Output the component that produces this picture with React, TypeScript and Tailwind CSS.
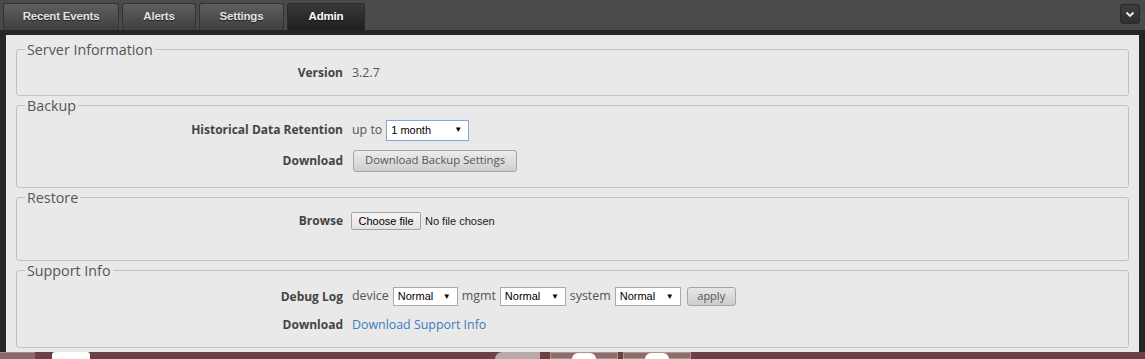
import React from "react";

const sans = { fontFamily: '"Open Sans", "Liberation Sans", sans-serif' };
const arial = { fontFamily: '"Liberation Sans", Arial, sans-serif' };

function Tab({ label, w, active }: { label: string; w: string; active?: boolean }) {
  return (
    <div
      className={`${w} h-[27px] flex items-center justify-center rounded-t-[3px] border border-b-0 text-[11.5px] font-bold tracking-[-0.2px] ${
        active
          ? "bg-gradient-to-b from-[#3a3a3a] to-[#1f1f1f] border-[#2a2a2a] text-white"
          : "bg-gradient-to-b from-[#5f5f5f] to-[#3f3f3f] border-[#333] text-[#e2e2e2]"
      }`}
      style={{ ...arial, textShadow: "0 1px 1px rgba(0,0,0,0.6)" }}
    >
      {label}
    </div>
  );
}

function FakeSelect({ value, w, focus }: { value: string; w: string; focus?: boolean }) {
  return (
    <div
      className={`${w} flex items-center justify-between bg-white border pl-[4px] pr-[6px] text-[11px] text-black ${
        focus ? "border-[#86a6d8] h-[21px]" : "border-[#a9a9a9] h-[19px]"
      }`}
      style={arial}
    >
      <span>{value}</span>
      <span className="text-[8px] leading-none">▼</span>
    </div>
  );
}

function Row({ label, children, className = "" }: { label: string; children?: React.ReactNode; className?: string }) {
  return (
    <div className={`flex items-center ${className}`}>
      <div className="w-[326px] text-right text-[12px] font-bold text-[#444]" style={sans}>
        {label}
      </div>
      <div className="ml-[9px] flex items-center text-[12.4px] text-[#555]" style={sans}>
        {children}
      </div>
    </div>
  );
}

function Box({ title, children, className = "" }: { title: string; children: React.ReactNode; className?: string }) {
  return (
    <fieldset className={`mx-[10px] border border-[#c2c2c2] rounded-[3px] ${className}`}>
      <legend
        className="ml-[8px] px-[2px] h-[19px] leading-[19px] text-[14.3px] text-[#555]"
        style={sans}
      >
        {title}
      </legend>
      {children}
    </fieldset>
  );
}

export default function App() {
  return (
    <div className="w-[1145px] h-[359px] bg-[#262626] overflow-hidden flex flex-col">
      {/* top tab bar */}
      <div className="h-[31px] bg-[#4a4a4a] flex items-end pl-[3px] pr-[5px] relative">
        <div className="flex items-end gap-[3px]">
          <Tab label="Recent Events" w="w-[116px]" />
          <Tab label="Alerts" w="w-[74px]" />
          <Tab label="Settings" w="w-[85px]" />
          <Tab label="Admin" w="w-[78px]" active />
        </div>
        <div className="ml-auto self-start mt-[4px] w-[20px] h-[20px] rounded-[3px] border border-[#2a2a2a] bg-gradient-to-b from-[#3e3e3e] to-[#2e2e2e] flex items-center justify-center">
          <svg width="10" height="7" viewBox="0 0 10 7">
            <path d="M1.5 1.5 L5 5 L8.5 1.5" stroke="#f0f0f0" strokeWidth="1.8" fill="none" />
          </svg>
        </div>
      </div>

      {/* content frame */}
      <div className="flex-1 px-[6px] pt-[5px] flex flex-col">
        <div className="flex-1 bg-[#e9e9e9] pt-[5px] pb-[4px]">
          <Box title="Server Information" className="pt-[4px] pb-[12px]">
            <Row label="Version" className="h-[20px]">
              3.2.7
            </Row>
          </Box>

          <Box title="Backup" className="pt-[5px] pb-[16px]">
            <Row label="Historical Data Retention" className="h-[20px]">
              <span className="mr-[4px]">up to</span>
              <FakeSelect value="1 month" w="w-[83px]" focus />
            </Row>
            <Row label="Download" className="h-[21px] mt-[10px]">
              <div
                className="w-[164px] h-[22px] ml-[1px] flex items-center justify-center rounded-[3px] border border-[#a6a6a6] bg-gradient-to-b from-[#ececec] to-[#cfcfcf] text-[11.3px] text-[#555]"
                style={sans}
              >
                Download Backup Settings
              </div>
            </Row>
          </Box>

          <Box title="Restore" className="pt-[5px] pb-[30px]">
            <Row label="Browse" className="h-[18px]">
              <div
                className="w-[70px] h-[18px] -ml-[1px] flex items-center justify-center rounded-[2px] border border-[#a3a3a3] bg-gradient-to-b from-[#f6f6f6] to-[#e2e2e2] text-[11px] text-black"
                style={arial}
              >
                Choose file
              </div>
              <span className="ml-[4px] text-[11px] text-[#222]" style={arial}>
                No file chosen
              </span>
            </Row>
          </Box>

          <Box title="Support Info" className="pt-[7px] pb-[13px]">
            <Row label="Debug Log" className="h-[19px]">
              <span className="mr-[4px]">device</span>
              <FakeSelect value="Normal" w="w-[65px]" />
              <span className="mx-[4px]">mgmt</span>
              <FakeSelect value="Normal" w="w-[66px]" />
              <span className="mx-[4px]">system</span>
              <FakeSelect value="Normal" w="w-[66px]" />
              <div
                className="ml-[6px] w-[49px] h-[19px] flex items-center justify-center rounded-[3px] border border-[#a6a6a6] bg-gradient-to-b from-[#e6e6e6] to-[#cdcdcd] text-[11px] text-[#555]"
                style={sans}
              >
                apply
              </div>
            </Row>
            <Row label="Download" className="h-[18px] mt-[10px]">
              <span className="text-[#3b7cbf]">Download Support Info</span>
            </Row>
          </Box>
        </div>
      </div>

      {/* bottom desktop strip */}
      <div className="h-[7px] bg-[#6b4143] flex items-start">
        <div className="w-[35px] h-[7px] bg-[#8a6a69] border-t border-[#a88]" />
        <div className="ml-[17px] w-[38px] h-[7px] bg-white rounded-t-[3px]" />
        <div className="ml-[405px] w-[45px] h-[7px] bg-[#b9a9aa] rounded-tl-[10px]" />
        <div className="ml-[10px] w-[68px] h-[7px] bg-[#8c6d6e] border border-[#a98] flex justify-center">
          <div className="w-[24px] h-[6px] bg-white rounded-t-full" />
        </div>
        <div className="ml-[5px] w-[68px] h-[7px] bg-[#8c6d6e] border border-[#a98] flex justify-center">
          <div className="w-[24px] h-[6px] bg-white rounded-t-full" />
        </div>
      </div>
    </div>
  );
}
